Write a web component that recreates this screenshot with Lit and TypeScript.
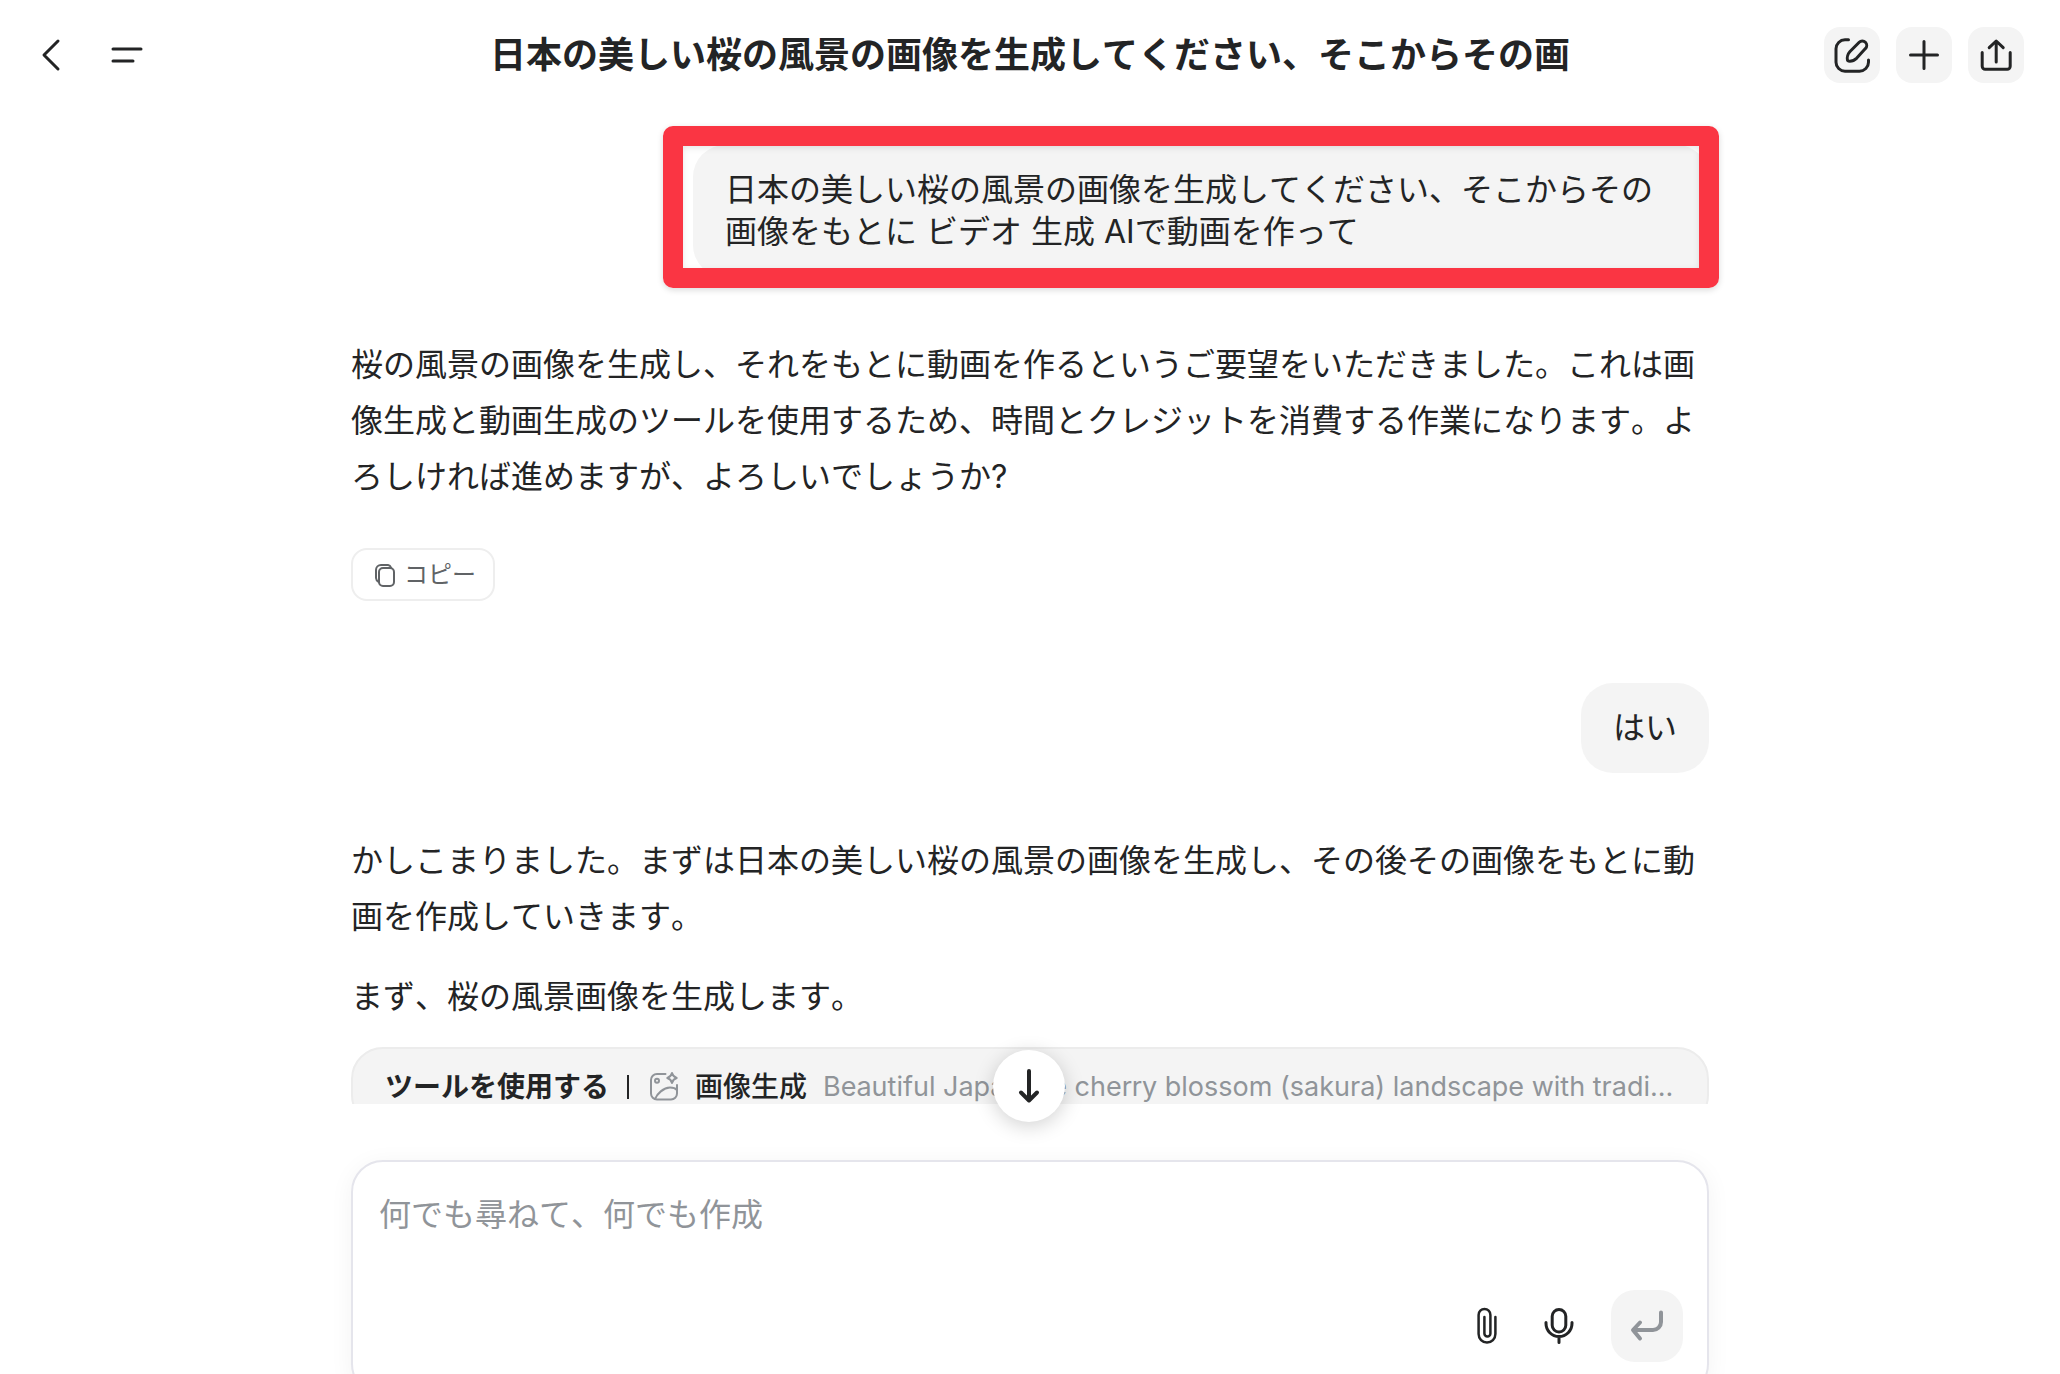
import { LitElement, html, css, svg } from "lit";
import { customElement, property } from "lit/decorators.js";

type IconName =
  | "back" | "menu" | "edit" | "plus" | "share" | "copy"
  | "image" | "down" | "attach" | "mic" | "enter";

interface IconSpec {
  width: number;
  height: number;
  stroke: number;
  body: unknown;
}

const icons: Record<IconName, IconSpec> = {
  back: { width: 24, height: 36, stroke: 3, body: svg`<path d="M19 4 5 18l14 14" />` },
  menu: { width: 32, height: 24, stroke: 3, body: svg`<path d="M2 6h28M2 18h20" />` },
  edit: {
    width: 40, height: 40, stroke: 3,
    body: svg`<path d="M16.500 4.800H13a9 9 0 0 0-9 9v13.400a9 9 0 0 0 9 9h14.500a9 9 0 0 0 9-9V25" />
      <path d="M33.400 7.200a4.300 4.300 0 0 0-6.200 0L18 16.500c-2 2.200-3.300 6.200-2.500 8.800.1.500.4.700.9.800 2.500.4 6.300-1 8.400-3l8.600-9.500a4.600 4.600 0 0 0 0-6.400Z" />`,
  },
  plus: { width: 32, height: 32, stroke: 3, body: svg`<path d="M16 2.500v27M2.500 16h27" />` },
  share: {
    width: 36, height: 36, stroke: 3,
    body: svg`<path d="M18.200 25V4.500M11.200 10.700l7-6.700 7 6.700M4.200 15.500v13.700a3 3 0 0 0 3 3h22a3 3 0 0 0 3-3V15.500" />`,
  },
  copy: {
    width: 24, height: 26, stroke: 2,
    body: svg`<rect x="4" y="6" width="15" height="18" rx="4" />
      <path d="M16 5.500A4 4 0 0 0 13 3H6a5 5 0 0 0-5 5v8a5 5 0 0 0 2.500 4" />`,
  },
  image: {
    width: 32, height: 32, stroke: 2,
    body: svg`<path d="M18.500 3H10a6 6 0 0 0-6 6v13.500a6 6 0 0 0 6 6h14a6 6 0 0 0 6-6V14" />
      <circle cx="10" cy="9.800" r="2" />
      <path d="M8 28c2-5 8.500-11.500 15-11.500 3 0 5.500.700 7 2.500" />
      <path d="M25 2c.800 3 1.700 4 4.700 5-3 1-3.900 2-4.700 5-.800-3-1.700-4-4.700-5 3-1 3.900-2 4.700-5Z" />`,
  },
  down: { width: 28, height: 36, stroke: 4, body: svg`<path d="M14 3v29M6 24.500l8 8 8-8" />` },
  attach: {
    width: 24, height: 38, stroke: 2.5,
    body: svg`<path d="M20.400 10v17.100a8.400 8.400 0 0 1-16.800 0V7.900a5.900 5.900 0 0 1 11.800 0V26.500a3 3 0 0 1-6 0V10" />`,
  },
  mic: {
    width: 32, height: 38, stroke: 3,
    body: svg`<rect x="9.200" y="2.500" width="13.600" height="22.500" rx="6.800" />
      <path d="M3 15.500v1a13 13 0 0 0 26 0v-1M16 30v5.500" />`,
  },
  enter: {
    width: 36, height: 36, stroke: 4,
    body: svg`<path d="M32 4.500V14a8 8 0 0 1-8 8H4.500M11 14.500 4 22l7 8.500" />`,
  },
};

@customElement("ui-icon")
class UiIcon extends LitElement {
  static styles = css`
    :host { display: inline-flex; flex: none; }
    .icon {
      display: block;
      fill: none;
      stroke: currentColor;
      stroke-linecap: round;
      stroke-linejoin: round;
    }
  `;

  @property() name: IconName = "plus";

  render() {
    const spec = icons[this.name];
    return html`<svg class="icon" aria-hidden="true"
      width=${spec.width} height=${spec.height}
      viewBox="0 0 ${spec.width} ${spec.height}"
      stroke-width=${spec.stroke}>${spec.body}</svg>`;
  }
}

@customElement("chat-header")
class ChatHeader extends LitElement {
  static styles = css`
    :host { display: block; flex: none; }
    .bar {
      display: grid;
      grid-template-columns: 1fr auto 1fr;
      align-items: center;
      height: 110px;
      padding: 0 36px;
      box-sizing: border-box;
    }
    .nav { display: flex; align-items: center; gap: 48px; padding-left: 3px; }
    .title {
      margin: 0;
      font-size: 36px;
      line-height: 48px;
      font-weight: 700;
      white-space: nowrap;
    }
    .actions { display: flex; justify-content: flex-end; gap: 16px; }
    .plain, .tile {
      display: flex;
      align-items: center;
      justify-content: center;
      padding: 0;
      border: 0;
      background: none;
      color: inherit;
      cursor: pointer;
    }
    .tile { width: 56px; height: 56px; border-radius: 16px; background: #f4f4f4; }
  `;

  @property() heading = "";

  render() {
    return html`
      <header class="bar">
        <div class="nav">
          <button class="plain" aria-label="戻る"><ui-icon name="back"></ui-icon></button>
          <button class="plain" aria-label="メニュー"><ui-icon name="menu"></ui-icon></button>
        </div>
        <h1 class="title">${this.heading}</h1>
        <div class="actions">
          <button class="tile" aria-label="編集"><ui-icon name="edit"></ui-icon></button>
          <button class="tile" aria-label="新規"><ui-icon name="plus"></ui-icon></button>
          <button class="tile" aria-label="共有"><ui-icon name="share"></ui-icon></button>
        </div>
      </header>
    `;
  }
}

@customElement("user-message")
class UserMessage extends LitElement {
  static styles = css`
    :host { display: flex; justify-content: flex-end; }
    .bubble {
      position: relative;
      max-width: 1016px;
      box-sizing: border-box;
      padding: 24px 32px;
      border-radius: 32px;
      background: #f4f4f4;
      font-size: 32px;
      line-height: 42px;
    }
    .marker {
      position: absolute;
      inset: -19px -10px -11px -30px;
      border: 20px solid #fa3543;
      border-radius: 10px;
      box-shadow: 0 2px 6px rgba(0, 0, 0, 0.15), inset 0 2px 6px rgba(0, 0, 0, 0.1);
      pointer-events: none;
    }
  `;

  @property() text = "";
  @property({ type: Boolean }) marked = false;

  render() {
    return html`<div class="bubble">${this.text}${this.marked ? html`<div class="marker"></div>` : ""}</div>`;
  }
}

@customElement("tool-card")
class ToolCard extends LitElement {
  static styles = css`
    :host { display: block; }
    .card {
      display: flex;
      align-items: center;
      height: 80px;
      padding: 0 24px 0 32px;
      box-sizing: border-box;
      border: 2px solid #ececec;
      border-radius: 32px;
      background: #f4f4f4;
      font-size: 28px;
      line-height: 40px;
      white-space: nowrap;
    }
    .label { font-weight: 700; }
    .divider { width: 2px; height: 24px; margin: 0 18px; background: currentColor; }
    .icon { color: #909499; }
    .name { margin: 0 16px; font-weight: 500; }
    .detail {
      flex: 1;
      min-width: 0;
      font-size: 27px;
      color: #909499;
    }
  `;

  @property() label = "";
  @property() name = "";
  @property() detail = "";

  render() {
    return html`
      <div class="card">
        <span class="label">${this.label}</span>
        <span class="divider"></span>
        <ui-icon class="icon" name="image"></ui-icon>
        <span class="name">${this.name}</span>
        <span class="detail">${this.detail}</span>
      </div>
    `;
  }
}

@customElement("chat-composer")
class ChatComposer extends LitElement {
  static styles = css`
    :host { display: block; }
    .box {
      display: flex;
      flex-direction: column;
      height: 236px;
      box-sizing: border-box;
      padding: 32px 24px 32px 26px;
      border: 2px solid #e5e5ec;
      border-radius: 32px;
      background: #fff;
      box-shadow: 0 4px 24px rgba(0, 0, 0, 0.05);
    }
    .prompt {
      flex: 1;
      min-height: 0;
      padding: 0;
      border: 0;
      outline: 0;
      resize: none;
      background: none;
      color: inherit;
      font: inherit;
      font-size: 32px;
      font-kerning: none;
      line-height: 42px;
    }
    .prompt::placeholder { color: #909499; opacity: 1; }
    .tools { display: flex; align-items: center; justify-content: flex-end; gap: 32px; }
    .tool, .send {
      display: flex;
      align-items: center;
      justify-content: center;
      padding: 0;
      border: 0;
      background: none;
      color: inherit;
      cursor: pointer;
    }
    .tool { width: 40px; height: 48px; }
    .send {
      width: 72px;
      height: 72px;
      border-radius: 24px;
      background: #f4f4f4;
      color: #909499;
    }
  `;

  render() {
    return html`
      <form class="box" @submit=${(e: Event) => e.preventDefault()}>
        <textarea class="prompt" aria-label="メッセージ" placeholder="何でも尋ねて、何でも作成"></textarea>
        <div class="tools">
          <button class="tool" type="button" aria-label="添付"><ui-icon name="attach"></ui-icon></button>
          <button class="tool" type="button" aria-label="音声入力"><ui-icon name="mic"></ui-icon></button>
          <button class="send" aria-label="送信"><ui-icon name="enter"></ui-icon></button>
        </div>
      </form>
    `;
  }
}

@customElement("app-root")
class AppRoot extends LitElement {
  static styles = css`
    :host {
      display: flex;
      flex-direction: column;
      height: 100vh;
      overflow: hidden;
      background: #fff;
      color: #232425;
      font-family: Inter, "Noto Sans CJK JP", sans-serif;
      font-kerning: none;
    }
    .thread { flex: 1; min-height: 0; overflow: hidden; padding: 35px 32px 0; }
    .column {
      display: flex;
      flex-direction: column;
      width: 100%;
      max-width: 1358px;
      margin: 0 auto;
    }
    .reply {
      display: flex;
      flex-direction: column;
      padding-top: 60px;
      font-size: 32px;
      line-height: 56px;
    }
    .text { margin: 0; }
    .text + .text { margin-top: 24px; }
    .tool { margin-top: 22px; }
    .copy {
      display: flex;
      align-items: center;
      align-self: flex-start;
      gap: 5px;
      height: 53px;
      margin: 43px 0 82px;
      padding: 0 17px 0 22px;
      border: 2px solid #eee;
      border-radius: 16px;
      background: #fff;
      color: #606366;
      font: inherit;
      font-size: 24px;
      line-height: 32px;
      cursor: pointer;
    }
    .dock { position: relative; flex: none; padding: 56px 32px 0; margin-bottom: -22px; }
    .jump {
      position: absolute;
      top: -54px;
      left: 50%;
      display: flex;
      align-items: center;
      justify-content: center;
      width: 72px;
      height: 72px;
      margin-left: -37px;
      padding: 0;
      border: 0;
      border-radius: 50%;
      background: #fff;
      color: inherit;
      box-shadow: 0 4px 20px rgba(0, 0, 0, 0.18);
      cursor: pointer;
    }
  `;

  render() {
    return html`
      <chat-header heading="日本の美しい桜の風景の画像を生成してください、そこからその画"></chat-header>
      <main class="thread">
        <div class="column">
          <user-message marked
            text="日本の美しい桜の風景の画像を生成してください、そこからその画像をもとに ビデオ 生成 AIで動画を作って"></user-message>
          <section class="reply">
            <p class="text">桜の風景の画像を生成し、それをもとに動画を作るというご要望をいただきました。これは画像生成と動画生成のツールを使用するため、時間とクレジットを消費する作業になります。よろしければ進めますが、よろしいでしょうか?</p>
            <button class="copy"><ui-icon name="copy"></ui-icon>コピー</button>
          </section>
          <user-message text="はい"></user-message>
          <section class="reply">
            <p class="text">かしこまりました。まずは日本の美しい桜の風景の画像を生成し、その後その画像をもとに動画を作成していきます。</p>
            <p class="text">まず、桜の風景画像を生成します。</p>
            <tool-card class="tool" label="ツールを使用する" name="画像生成"
              detail="Beautiful Japanese cherry blossom (sakura) landscape with tradi..."></tool-card>
          </section>
        </div>
      </main>
      <footer class="dock">
        <button class="jump" aria-label="最新のメッセージへ"><ui-icon name="down"></ui-icon></button>
        <div class="column"><chat-composer></chat-composer></div>
      </footer>
    `;
  }
}
